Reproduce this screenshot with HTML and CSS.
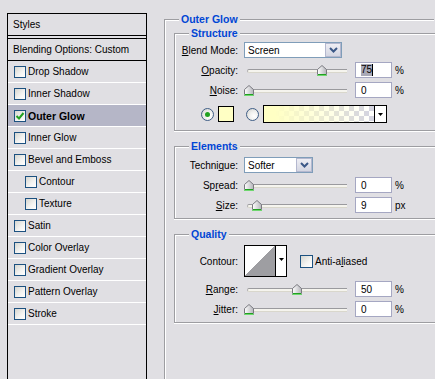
FILE: index.html
```html
<!DOCTYPE html>
<html>
<head>
<meta charset="utf-8">
<link rel="stylesheet" href="styles.css">
</head>
<body>
<svg class="defs" width="0" height="0" aria-hidden="true">
  <defs>
    <linearGradient id="thumbFill" x1="0" y1="0" x2="1" y2="0">
      <stop offset="0" stop-color="#ffffff"/>
      <stop offset="1" stop-color="#b4b4ba"/>
    </linearGradient>
    <symbol id="thumb" viewBox="0 0 10 11">
      <path d="M0.5 4.5 L5 0.5 L9.5 4.5 V9.5 H0.5 Z" fill="url(#thumbFill)" stroke="#7a7a80"/>
      <rect x="1" y="9" width="8" height="1" fill="#21a121"/>
      <rect x="0" y="10" width="10" height="1" fill="#6fd66f"/>
    </symbol>
    <symbol id="chev" viewBox="0 0 9 6">
      <polyline points="1,1 4.5,4.5 8,1" fill="none" stroke="#3b5887" stroke-width="2"/>
    </symbol>
    <symbol id="tri" viewBox="0 0 5 3">
      <polygon points="0,0 5,0 2.5,3" fill="#000"/>
    </symbol>
  </defs>
</svg>
<div class="app">
  <aside class="styles-panel">
    <div class="sp-head">Styles</div>
    <div class="sp-blend">Blending Options: Custom</div>
    <ul class="sp-list">
      <li class="sp-item"><span class="cb"></span>Drop Shadow</li>
      <li class="sp-item"><span class="cb"></span>Inner Shadow</li>
      <li class="sp-item selected"><span class="cb"><svg class="check" viewBox="0 0 10 10"><polyline points="1.5,5 4,7.5 8.5,2" fill="none" stroke="#21a121" stroke-width="2"/></svg></span>Outer Glow</li>
      <li class="sp-item"><span class="cb"></span>Inner Glow</li>
      <li class="sp-item"><span class="cb"></span>Bevel and Emboss</li>
      <li class="sp-item sub"><span class="cb"></span>Contour</li>
      <li class="sp-item sub"><span class="cb"></span>Texture</li>
      <li class="sp-item"><span class="cb"></span>Satin</li>
      <li class="sp-item"><span class="cb"></span>Color Overlay</li>
      <li class="sp-item"><span class="cb"></span>Gradient Overlay</li>
      <li class="sp-item"><span class="cb"></span>Pattern Overlay</li>
      <li class="sp-item"><span class="cb"></span>Stroke</li>
    </ul>
  </aside>

  <section class="group outer">
    <span class="legend">Outer Glow</span>

    <div class="group structure">
      <span class="legend">Structure</span>
      <div class="row">
        <span class="lbl"><u>B</u>lend Mode:</span>
        <div class="select sel-blend"><span class="sel-text">Screen</span><span class="sel-btn"><svg class="chev"><use href="#chev"/></svg></span></div>
      </div>
      <div class="row">
        <span class="lbl"><u>O</u>pacity:</span>
        <div class="slider"><div class="track"></div><svg class="thumb" style="left:73px"><use href="#thumb"/></svg></div>
        <span class="field"><span class="hl">75</span><span class="caret"></span></span><span class="unit">%</span>
      </div>
      <div class="row">
        <span class="lbl"><u>N</u>oise:</span>
        <div class="slider"><div class="track"></div><svg class="thumb" style="left:0px"><use href="#thumb"/></svg></div>
        <span class="field">0</span><span class="unit">%</span>
      </div>
      <div class="row color-row">
        <span class="radio on"><span class="dot"></span></span>
        <span class="swatch"></span>
        <span class="radio"></span>
        <span class="grad"><span class="grad-fill"></span><span class="grad-arrow"><svg class="tri"><use href="#tri"/></svg></span></span>
      </div>
    </div>

    <div class="group elements">
      <span class="legend">Elements</span>
      <div class="row">
        <span class="lbl">Techni<u>q</u>ue:</span>
        <div class="select sel-tech"><span class="sel-text">Softer</span><span class="sel-btn"><svg class="chev"><use href="#chev"/></svg></span></div>
      </div>
      <div class="row">
        <span class="lbl">Sp<u>r</u>ead:</span>
        <div class="slider"><div class="track"></div><svg class="thumb" style="left:0px"><use href="#thumb"/></svg></div>
        <span class="field">0</span><span class="unit">%</span>
      </div>
      <div class="row">
        <span class="lbl"><u>S</u>ize:</span>
        <div class="slider"><div class="track"></div><svg class="thumb" style="left:8px"><use href="#thumb"/></svg></div>
        <span class="field">9</span><span class="unit">px</span>
      </div>
    </div>

    <div class="group quality">
      <span class="legend">Quality</span>
      <div class="row contour-row">
        <span class="lbl">Contour:</span>
        <span class="contour"><span class="contour-preview"></span><span class="contour-arrow"><svg class="tri"><use href="#tri"/></svg></span></span>
        <span class="cb cb-lg"></span><span class="cb-text">Anti-a<u>l</u>iased</span>
      </div>
      <div class="row">
        <span class="lbl"><u>R</u>ange:</span>
        <div class="slider"><div class="track"></div><svg class="thumb" style="left:48px"><use href="#thumb"/></svg></div>
        <span class="field">50</span><span class="unit">%</span>
      </div>
      <div class="row">
        <span class="lbl"><u>J</u>itter:</span>
        <div class="slider"><div class="track"></div><svg class="thumb" style="left:0px"><use href="#thumb"/></svg></div>
        <span class="field">0</span><span class="unit">%</span>
      </div>
    </div>
  </section>
</div>
</body>
</html>
```

FILE: styles.css
```css
html, body {
  margin: 0;
  padding: 0;
  overflow: hidden;
  background: #e0dfe3;
}
body {
  font-family: "Liberation Sans", Arial, sans-serif;
  font-size: 10px;
  color: #000;
}
.defs {
  position: absolute;
  width: 0;
  height: 0;
}
.app {
  display: flex;
  align-items: flex-start;
  width: 435px;
  height: 379px;
  padding: 13px 0 0 7px;
  box-sizing: border-box;
  overflow: hidden;
}

/* ---------- Styles list ---------- */
.styles-panel {
  flex: none;
  width: 140px;
  height: 366px;
  border: 1px solid #000;
  border-bottom: none;
  box-sizing: border-box;
}
.sp-head {
  height: 21px;
  line-height: 21px;
  padding-left: 5px;
  border-bottom: 1px solid #000;
}
.sp-blend {
  margin-top: 2px;
  height: 21px;
  line-height: 21px;
  padding-left: 5px;
  border-top: 1px solid #000;
  border-bottom: 1px solid #000;
}
.sp-list {
  list-style: none;
  margin: 0;
  padding: 0;
}
.sp-item {
  display: flex;
  align-items: center;
  height: 21px;
  padding-left: 6px;
  border-bottom: 1px solid #fff;
}
.sp-item.sub {
  padding-left: 17px;
}
.sp-item.selected {
  background: #b5b6c7;
  font-weight: bold;
  font-size: 10.5px;
}
.cb {
  flex: none;
  display: flex;
  align-items: center;
  justify-content: center;
  width: 12px;
  height: 12px;
  box-sizing: border-box;
  margin-right: 2px;
  border: 1px solid #1c5180;
  background: linear-gradient(135deg, #d6d6d0 0%, #f4f4f2 60%, #ffffff 100%);
}
.cb-lg {
  width: 13px;
  height: 13px;
}
.check {
  width: 10px;
  height: 10px;
}

/* ---------- Group boxes ---------- */
.group {
  position: relative;
  box-sizing: border-box;
  border: 1px solid #9d9da1;
  box-shadow: inset 1px 1px 0 #fff, 1px 1px 0 #fff;
}
.legend {
  position: absolute;
  top: -7px;
  left: 14px;
  height: 12px;
  line-height: 12px;
  padding: 0 2px;
  background: #e0dfe3;
  color: #0046d5;
  font-weight: bold;
  font-size: 10.5px;
}
.outer {
  flex: none;
  margin: 6px 0 0 17px;
  width: 270px;
  height: 360px;
  padding: 13px 0 0 9px;
  border-right: none;
  border-bottom: none;
  box-shadow: inset 1px 1px 0 #fff;
}
.structure, .elements, .quality {
  width: 261px;
  margin-bottom: 15px;
  border-right: none;
  box-shadow: inset 1px 1px 0 #fff, 0 1px 0 #fff;
}
.structure {
  padding: 8px 0 7px;
}
.elements, .quality {
  padding: 10px 0 5px;
}

/* ---------- Rows ---------- */
.row {
  display: flex;
  align-items: center;
  height: 16px;
}
.row + .row {
  margin-top: 4px;
}
.row.color-row {
  margin-top: 7px;
  height: 18px;
}
.row.contour-row {
  height: 32px;
}
.lbl {
  flex: none;
  width: 63px;
  margin-right: 6px;
  text-align: right;
  white-space: nowrap;
}

/* select */
.select {
  flex: none;
  display: flex;
  align-items: center;
  justify-content: space-between;
  height: 16px;
  box-sizing: border-box;
  border: 1px solid #7f9db9;
  background: #fff;
}
.sel-blend { width: 98px; }
.sel-tech { width: 69px; }
.sel-text {
  padding-left: 3px;
}
.sel-btn {
  display: flex;
  align-items: center;
  justify-content: center;
  width: 16px;
  height: 14px;
  box-sizing: border-box;
  border: 1px solid #b4b8cf;
  background: linear-gradient(#eeeef4, #d4d6e2);
}
.chev {
  width: 9px;
  height: 6px;
}

/* slider */
.slider {
  position: relative;
  flex: none;
  width: 106px;
  height: 16px;
}
.track {
  margin: 7px 3px 0;
  height: 4px;
  box-sizing: border-box;
  border-top: 1px solid #9a9a9e;
  border-bottom: 1px solid #d9d7cc;
  border-left: 1px solid #b0b0b0;
  border-radius: 2px 0 0 2px;
  background: #f5f4ee;
}
.thumb {
  position: absolute;
  top: 3px;
  width: 10px;
  height: 11px;
}

/* number field */
.field {
  flex: none;
  display: flex;
  align-items: center;
  width: 37px;
  height: 16px;
  box-sizing: border-box;
  margin-left: 5px;
  padding-left: 5px;
  border: 1px solid #a5a7c2;
  background: #fff;
}
.hl {
  background: #a9a9b6;
  line-height: 12px;
}
.caret {
  width: 1px;
  height: 12px;
  background: #000;
}
.unit {
  margin-left: 3px;
}

/* colour row */
.radio {
  flex: none;
  display: flex;
  align-items: center;
  justify-content: center;
  width: 13px;
  height: 13px;
  box-sizing: border-box;
  border: 1px solid #3f5e86;
  border-radius: 50%;
  background: radial-gradient(circle at 65% 65%, #ffffff 0%, #f0f0ee 45%, #cfcfcb 100%);
}
.radio.on {
  margin-left: 26px;
}
.dot {
  width: 5px;
  height: 5px;
  border-radius: 50%;
  background: #21a121;
}
.swatch {
  flex: none;
  width: 16px;
  height: 16px;
  box-sizing: border-box;
  margin: 0 12px 0 4px;
  border: 1px solid #000;
  background: #ffffc4;
}
.grad {
  flex: none;
  display: flex;
  width: 124px;
  height: 18px;
  box-sizing: border-box;
  margin-left: 4px;
  border: 1px solid #000;
}
.grad-fill {
  flex: 1;
  background:
    linear-gradient(to right, #ffffc4 0%, #ffffc4 10%, rgba(255, 255, 196, 0) 100%),
    repeating-conic-gradient(#d3d3e1 0% 25%, #ffffff 0% 50%) 0 0 / 10px 10px;
}
.grad-arrow {
  display: flex;
  align-items: center;
  justify-content: center;
  width: 11px;
  border-left: 1px solid #000;
  background: #fff;
}
.tri {
  width: 5px;
  height: 3px;
}

/* contour */
.contour {
  flex: none;
  display: flex;
  width: 43px;
  height: 32px;
  box-sizing: border-box;
  border: 1px solid #000;
  background: #fff;
  margin-right: 13px;
}
.contour-preview {
  width: 30px;
  background: linear-gradient(to bottom right, #ffffff 50%, #9e9ea2 50%);
}
.contour-arrow {
  display: flex;
  align-items: center;
  justify-content: center;
  flex: 1;
  border-left: 1px solid #000;
  padding-bottom: 3px;
}
.cb-text {
  white-space: nowrap;
}
```
